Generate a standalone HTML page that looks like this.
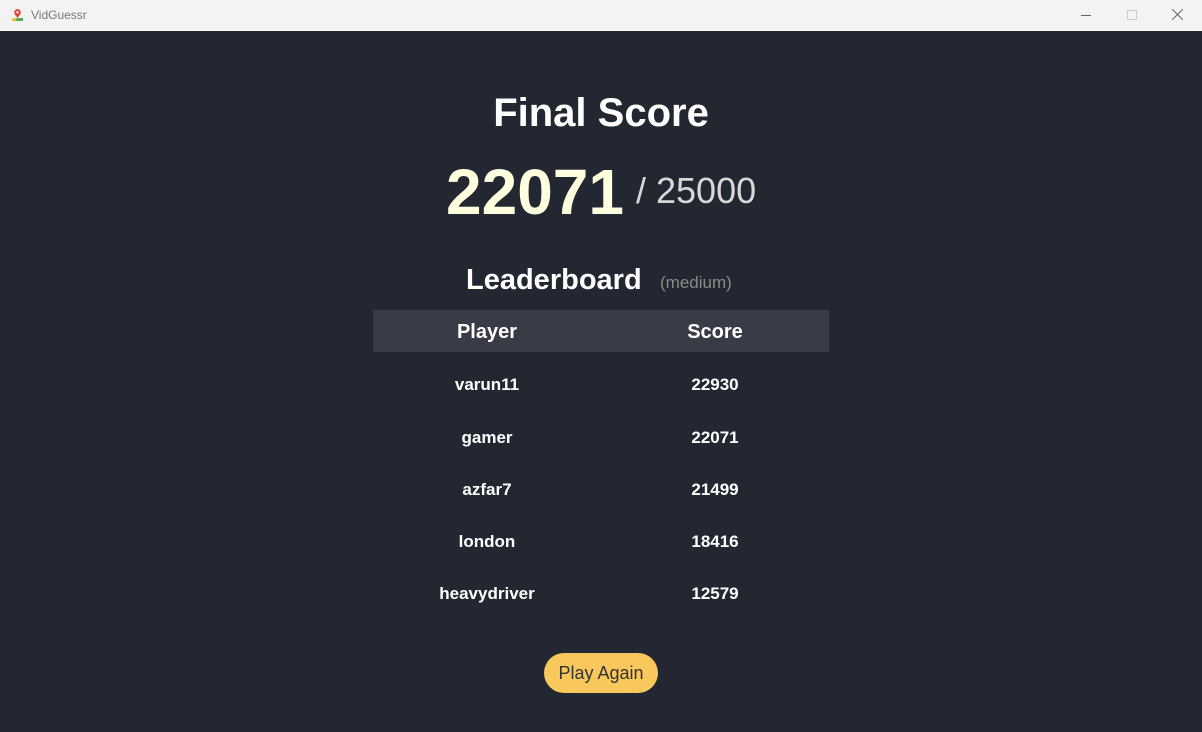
<!DOCTYPE html>
<html><head><meta charset="utf-8"><style>
html,body{margin:0;padding:0;width:1202px;height:732px;overflow:hidden;background:#222731;font-family:"Liberation Sans",sans-serif;}
.tb{position:absolute;left:0;top:0;width:1202px;height:31px;background:#f3f3f3;}
.tb .t{position:absolute;left:31px;top:8px;font-size:12px;color:#777;}
.c{position:absolute;text-align:center;white-space:nowrap;}
.row{position:absolute;left:373px;width:456px;height:20px;}
.row span{position:absolute;width:228px;text-align:center;color:#fff;font-weight:bold;font-size:17px;}
</style></head><body>
<div class="tb">
<svg style="position:absolute;left:11px;top:8px" width="13" height="14" viewBox="0 0 13 14"><path d="M1 10 L12 10 L12 13 L1 13Z" fill="#5aa85a"/><path d="M1 10 L6 10 L4 13 L1 13Z" fill="#f4c040"/><path d="M6.5 1a3.3 3.3 0 0 1 3.3 3.3c0 2.3-3.3 5.5-3.3 5.5S3.2 6.6 3.2 4.3A3.3 3.3 0 0 1 6.5 1z" fill="#e0463a"/><circle cx="6.5" cy="4.3" r="1.2" fill="#fff"/></svg>
<div class="t">VidGuessr</div>
<div style="position:absolute;left:1081px;top:15px;width:10px;height:1px;background:#666"></div>
<div style="position:absolute;left:1127px;top:10px;width:8px;height:8px;border:1px solid #ccc"></div>
<svg style="position:absolute;left:1172px;top:9px" width="11" height="11"><path d="M0 0L11 11M11 0L0 11" stroke="#666" stroke-width="1"/></svg>
</div>
<div class="c" style="left:0;width:1202px;top:88px;font-size:40px;font-weight:bold;color:#fff;line-height:50px">Final Score</div>
<div class="c" style="left:446px;top:155px;font-size:64px;font-weight:bold;color:#ffffe0;line-height:74px">22071</div>
<div class="c" style="left:636px;top:169px;font-size:36px;color:#d8d8d8;line-height:44px">/ 25000</div>
<div class="c" style="left:466px;top:262px;font-size:29px;font-weight:bold;color:#fff;line-height:36px">Leaderboard</div>
<div class="c" style="left:660px;top:272px;font-size:17px;color:#8a8a8a;line-height:22px">(medium)</div>
<div style="position:absolute;left:373px;top:310px;width:456px;height:42px;background:#393c46"></div>
<div class="row" style="top:320px"><span style="left:0;font-size:20px;line-height:24px">Player</span><span style="left:228px;font-size:20px;line-height:24px">Score</span></div>
<div class="row" style="top:375px"><span style="left:0">varun11</span><span style="left:228px">22930</span></div>
<div class="row" style="top:428px"><span style="left:0">gamer</span><span style="left:228px">22071</span></div>
<div class="row" style="top:480px"><span style="left:0">azfar7</span><span style="left:228px">21499</span></div>
<div class="row" style="top:532px"><span style="left:0">london</span><span style="left:228px">18416</span></div>
<div class="row" style="top:584px"><span style="left:0">heavydriver</span><span style="left:228px">12579</span></div>
<div class="c" style="left:544px;top:653px;width:114px;height:40px;border-radius:20px;background:#f8c85c;color:#333;font-size:18px;line-height:40px">Play Again</div>
</body></html>
